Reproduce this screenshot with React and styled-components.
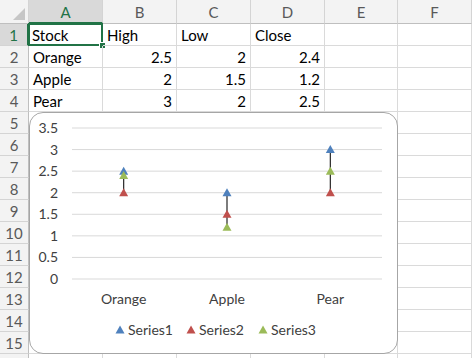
import React from "react";
import styled, { createGlobalStyle } from "styled-components";

const Global = createGlobalStyle`
  html, body { margin: 0; padding: 0; background: #fff; }
  body { font-family: Lato, "Liberation Sans", sans-serif; overflow: hidden; }
`;

const COLS = [74, 74, 74, 74, 73, 74];
const LETTERS = ["A", "B", "C", "D", "E", "F"];

const Sheet = styled.div`
  position: relative;
  width: 474px;
  height: 358px;
  overflow: hidden;
  display: grid;
  grid-template-columns: 29px ${COLS.map((c) => c + "px").join(" ")};
  grid-template-rows: 24px repeat(16, 22px);
`;

const Corner = styled.div`
  background: #f3f3f3;
  border-right: 1px solid #d4d4d4;
  border-bottom: 1px solid #bfbfbf;
  box-sizing: border-box;
  display: flex;
  align-items: flex-end;
  justify-content: flex-end;
  padding: 0 3px 3px 0;
`;

const ColHead = styled.div`
  box-sizing: border-box;
  background: ${(p) => (p.$active ? "#d9d9d9" : "#f3f3f3")};
  color: ${(p) => (p.$active ? "#217346" : "#595959")};
  border-right: 1px solid #d4d4d4;
  border-bottom: ${(p) => (p.$active ? "2px solid #217346" : "1px solid #bfbfbf")};
  display: flex;
  align-items: center;
  justify-content: center;
  font-size: 15px;
  padding-top: ${(p) => (p.$active ? "1px" : "0")};
`;

const RowHead = styled.div`
  box-sizing: border-box;
  background: ${(p) => (p.$active ? "#d9d9d9" : "#f3f3f3")};
  color: ${(p) => (p.$active ? "#217346" : "#595959")};
  border-right: ${(p) => (p.$active ? "2px solid #217346" : "1px solid #bfbfbf")};
  border-bottom: 1px solid #d4d4d4;
  display: flex;
  align-items: center;
  justify-content: center;
  font-size: 15px;
`;

const Cell = styled.div`
  position: relative;
  box-sizing: border-box;
  border-right: 1px solid #dadada;
  border-bottom: 1px solid #dadada;
  display: flex;
  align-items: center;
  justify-content: ${(p) => (p.$num ? "flex-end" : "flex-start")};
  padding: 0 4px 0 4px;
  font-size: 15px;
  color: #000;
  white-space: nowrap;
  ${(p) =>
    p.$selected &&
    `
    box-shadow: inset 0 0 0 2px #217346;
    margin-top: -1px;
    margin-left: -1px;
    border: none;
    width: calc(100% + 1px);
    height: calc(100% + 1px);
    &::after {
      content: "";
      position: absolute;
      right: -3px;
      bottom: -3px;
      width: 5px;
      height: 5px;
      background: #217346;
      border: 1px solid #fff;
    }
  `}
`;

const ChartBox = styled.div`
  position: absolute;
  left: 29px;
  top: 112px;
  width: 369px;
  height: 242px;
  box-sizing: border-box;
  background: #fff;
  border: 1.5px solid #a6a6a6;
  border-radius: 14px;
  overflow: hidden;
`;

const AxisText = styled.text`
  font-family: Lato, "Liberation Sans", sans-serif;
  font-size: 14px;
  fill: #404040;
`;

const data = [
  { name: "Orange", high: 2.5, low: 2, close: 2.4 },
  { name: "Apple", high: 2, low: 1.5, close: 1.2 },
  { name: "Pear", high: 3, low: 2, close: 2.5 },
];

const rows = [
  ["Stock", "High", "Low", "Close"],
  ...data.map((d) => [d.name, d.high, d.low, d.close]),
];

const BLUE = "#4f81bd";
const RED = "#c0504d";
const GREEN = "#9bbb59";

const PX0 = 72;
const PX1 = 382;
const Y0 = 279;
const UNIT = (279 - 128) / 3.5;
const yOf = (v) => Y0 - v * UNIT;
const catW = (PX1 - PX0) / 3;
const xOf = (i) => PX0 + catW * (i + 0.5);

function Tri({ cx, cy, color }) {
  return (
    <polygon
      points={`${cx},${cy - 4.5} ${cx - 4.5},${cy + 3.5} ${cx + 4.5},${cy + 3.5}`}
      fill={color}
    />
  );
}

function Chart() {
  const ticks = [0, 0.5, 1, 1.5, 2, 2.5, 3, 3.5];
  const legend = [
    { label: "Series1", color: BLUE, x: 120 },
    { label: "Series2", color: RED, x: 191 },
    { label: "Series3", color: GREEN, x: 263 },
  ];
  return (
    <ChartBox>
      <svg width="369" height="242" viewBox="29 112 369 242" style={{ display: "block", margin: "-1.5px" }}>
        {ticks.map((t) => (
          <g key={t}>
            <line x1={PX0} x2={PX1} y1={yOf(t)} y2={yOf(t)} stroke="#d9d9d9" strokeWidth="1" />
            <AxisText x={58} y={yOf(t) + 5} textAnchor="end">
              {t}
            </AxisText>
          </g>
        ))}
        {data.map((d, i) => {
          const vals = [d.high, d.low, d.close];
          const mx = Math.max(...vals);
          const mn = Math.min(...vals);
          const cx = xOf(i);
          return (
            <g key={d.name}>
              <line x1={cx} x2={cx} y1={yOf(mx)} y2={yOf(mn)} stroke="#262626" strokeWidth="1.2" />
              <Tri cx={cx} cy={yOf(d.high)} color={BLUE} />
              <Tri cx={cx} cy={yOf(d.low)} color={RED} />
              <Tri cx={cx} cy={yOf(d.close)} color={GREEN} />
              <AxisText x={cx} y={304} textAnchor="middle">
                {d.name}
              </AxisText>
            </g>
          );
        })}
        {legend.map((l) => (
          <g key={l.label}>
            <Tri cx={l.x} cy={330} color={l.color} />
            <AxisText x={l.x + 8} y={335}>
              {l.label}
            </AxisText>
          </g>
        ))}
      </svg>
    </ChartBox>
  );
}

export default function App() {
  const bodyRows = 16;
  return (
    <>
      <Global />
      <Sheet>
        <Corner>
          <svg width="12" height="12" viewBox="0 0 12 12">
            <polygon points="12,0 12,12 0,12" fill="#c6c6c6" />
          </svg>
        </Corner>
        {LETTERS.map((l, i) => (
          <ColHead key={l} $active={i === 0}>
            {l}
          </ColHead>
        ))}
        {Array.from({ length: bodyRows }).map((_, r) => (
          <React.Fragment key={r}>
            <RowHead $active={r === 0}>{r < 15 ? r + 1 : ""}</RowHead>
            {LETTERS.map((l, c) => {
              const v = rows[r] ? rows[r][c] : undefined;
              const isNum = typeof v === "number";
              return (
                <Cell key={l} $num={isNum} $selected={r === 0 && c === 0}>
                  {v !== undefined ? String(v) : ""}
                </Cell>
              );
            })}
          </React.Fragment>
        ))}
        <Chart />
      </Sheet>
    </>
  );
}
